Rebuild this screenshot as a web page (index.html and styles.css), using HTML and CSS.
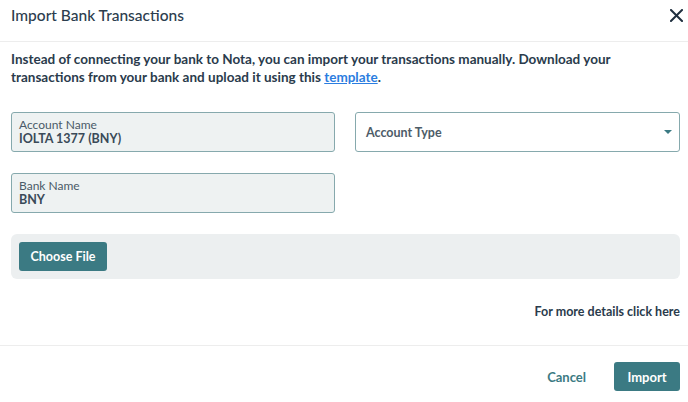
FILE: index.html
```html
<!DOCTYPE html>
<html lang="en">
<head>
    <meta charset="UTF-8">
    <meta name="viewport" content="width=device-width, initial-scale=1.0">
    <title>Import Bank Transactions</title>
    <link rel="stylesheet" href="styles.css">
</head>
<body>
    <div class="modal">
        <header class="modal-header">
            <h1>Import Bank Transactions</h1>
            <button class="close-btn" aria-label="Close">
                <svg width="13" height="13" viewBox="0 0 13 13">
                    <path d="M1 1 L12 12 M12 1 L1 12" stroke="#1f2f3f" stroke-width="2" stroke-linecap="square"/>
                </svg>
            </button>
        </header>

        <div class="modal-body">
            <p class="intro">Instead of connecting your bank to Nota, you can import your transactions manually. Download your transactions from your bank and upload it using this <a href="#">template</a>.</p>

            <div class="fields">
                <div class="field filled">
                    <span class="field-label">Account Name</span>
                    <span class="field-value">IOLTA 1377 (BNY)</span>
                </div>
                <div class="field select">
                    <span class="placeholder">Account Type</span>
                    <span class="caret"></span>
                </div>
                <div class="field filled">
                    <span class="field-label">Bank Name</span>
                    <span class="field-value">BNY</span>
                </div>
            </div>

            <div class="file-box">
                <button class="btn">Choose File</button>
            </div>

            <p class="details">For more details click here</p>
        </div>

        <footer class="modal-footer">
            <button class="btn-link">Cancel</button>
            <button class="btn">Import</button>
        </footer>
    </div>
</body>
</html>
```

FILE: styles.css
```css
body {
    margin: 0;
    font-family: Lato, "Open Sans", sans-serif;
    color: #2a3b4c;
    background: #fff;
}

.modal {
    width: 688px;
    height: 402px;
}

.modal-header {
    display: flex;
    justify-content: space-between;
    align-items: flex-start;
    height: 42px;
    padding: 0 5px 0 11px;
    border-bottom: 1px solid #ededed;
    box-sizing: border-box;
}

.modal-header h1 {
    margin: 5px 0 0;
    font-size: 15.5px;
    font-weight: 500;
    line-height: 20px;
    color: #2c3d4e;
}

.close-btn {
    margin-top: 9px;
    padding: 0;
    border: none;
    background: none;
    cursor: pointer;
}

.modal-body {
    padding: 8px 8px 0 11px;
    height: 304px;
    box-sizing: border-box;
    border-bottom: 1px solid #ededed;
}

.intro {
    margin: 0;
    font-size: 13.5px;
    font-weight: 700;
    line-height: 18px;
    color: #2a3b4c;
}

.intro a {
    color: #2b7de0;
}

.fields {
    display: grid;
    grid-template-columns: 324px 325px;
    column-gap: 20px;
    row-gap: 21px;
    margin-top: 26px;
}

.field {
    height: 40px;
    box-sizing: border-box;
    border: 1px solid #86a9ad;
    border-radius: 3px;
    padding: 0 7px;
}

.field.filled {
    display: flex;
    flex-direction: column;
    justify-content: center;
    background: #eef2f2;
}

.field-label {
    font-size: 12px;
    line-height: 13px;
    color: #4a5a68;
}

.field-value {
    font-size: 12.5px;
    font-weight: 700;
    line-height: 16px;
    color: #3a4a58;
}

.field.select {
    display: flex;
    justify-content: space-between;
    align-items: center;
    padding: 0 7px 0 10px;
    background: #fff;
}

.placeholder {
    font-size: 12.5px;
    font-weight: 700;
    color: #4d5c68;
}

.caret {
    width: 0;
    height: 0;
    border-left: 4px solid transparent;
    border-right: 4px solid transparent;
    border-top: 4px solid #3b7a83;
}

.file-box {
    margin-top: 21px;
    height: 45px;
    padding: 8px;
    box-sizing: border-box;
    background: #eceff0;
    border-radius: 6px;
}

.btn {
    height: 29px;
    padding: 0 13px;
    border: none;
    border-radius: 3px;
    background: #3b7a83;
    color: #fff;
    font-family: inherit;
    font-size: 13px;
    font-weight: 700;
    cursor: pointer;
}

.file-box .btn {
    width: 88px;
    padding: 0;
    font-size: 12.5px;
}

.details {
    margin: 24px 0 0;
    text-align: right;
    font-size: 12.5px;
    font-weight: 700;
    line-height: 18px;
    color: #2a3b4c;
}

.modal-footer {
    display: flex;
    justify-content: flex-end;
    align-items: center;
    gap: 28px;
    padding: 16px 8px 0 0;
}

.modal-footer .btn {
    width: 66px;
    padding: 0;
}

.btn-link {
    padding: 0;
    border: none;
    background: none;
    color: #3b7a83;
    font-family: inherit;
    font-size: 13px;
    font-weight: 700;
    cursor: pointer;
}
```
